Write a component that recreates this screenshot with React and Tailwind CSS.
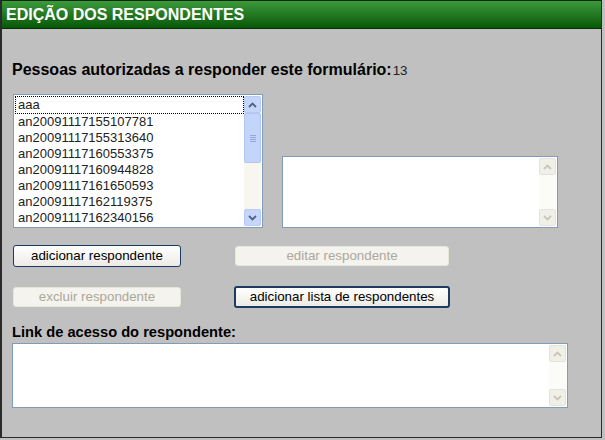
import React from "react";

const items = [
  "an20091117155107781",
  "an20091117155313640",
  "an20091117160553375",
  "an20091117160944828",
  "an20091117161650593",
  "an20091117162119375",
  "an20091117162340156",
];

function Chevron({ up, color }) {
  return (
    <svg width="9" height="6" viewBox="0 0 9 6">
      <path
        d={up ? "M1 5 L4.5 1.5 L8 5" : "M1 1 L4.5 4.5 L8 1"}
        fill="none"
        stroke={color}
        strokeWidth="1.8"
      />
    </svg>
  );
}

function ActiveScrollbar() {
  return (
    <div className="flex w-[17px] shrink-0 flex-col bg-[#f7f7f0]">
      <div className="flex h-[17px] items-center justify-center rounded-[2px] border border-[#b7caf5] bg-[#c6d6fb]">
        <Chevron up color="#4d6185" />
      </div>
      <div className="flex h-[50px] flex-col items-center justify-center gap-[1px] rounded-[2px] border border-[#b1c5f3] bg-[#c4d5fc]">
        <div className="h-px w-[6px] bg-[#8fa8e4]" />
        <div className="h-px w-[6px] bg-[#8fa8e4]" />
        <div className="h-px w-[6px] bg-[#8fa8e4]" />
        <div className="h-px w-[6px] bg-[#8fa8e4]" />
      </div>
      <div className="flex-1" />
      <div className="flex h-[17px] items-center justify-center rounded-[2px] border border-[#b7caf5] bg-[#c6d6fb]">
        <Chevron color="#4d6185" />
      </div>
    </div>
  );
}

function DisabledScrollbar() {
  return (
    <div className="flex w-[17px] shrink-0 flex-col bg-[#fbfbf8]">
      <div className="flex h-[17px] items-center justify-center rounded-[2px] border border-[#e4e3da] bg-[#f1f0e8]">
        <Chevron up color="#c9c7ba" />
      </div>
      <div className="flex-1" />
      <div className="flex h-[17px] items-center justify-center rounded-[2px] border border-[#e4e3da] bg-[#f1f0e8]">
        <Chevron color="#c9c7ba" />
      </div>
    </div>
  );
}

function Btn({ children, disabled, className = "" }) {
  return disabled ? (
    <div
      className={`flex h-[20px] items-center justify-center rounded-[3px] border border-[#e6e5dc] bg-[#f4f3ee] text-[13.33px] text-[#aca899] ${className}`}
    >
      {children}
    </div>
  ) : (
    <div
      className={`flex h-[22px] items-center justify-center rounded-[3px] border border-[#1c3a62] bg-gradient-to-b from-white to-[#ecebe6] text-[13.33px] text-black ${className}`}
    >
      {children}
    </div>
  );
}

export default function App() {
  return (
    <div
      className="h-[440px] w-[605px] bg-[#c0c0c0]"
      style={{ fontFamily: '"Liberation Sans", Arial, sans-serif' }}
    >
      <div className="flex h-[438px] w-[602px] flex-col border-b border-l-2 border-r border-[#2a2a2a]">
        <div className="flex h-[29px] items-center border-y border-[#0e2a0e] bg-gradient-to-b from-[#3c9a3c] to-[#055805] pl-[4px] pt-[1px] text-[16px] font-bold text-white">
          EDIÇÃO DOS RESPONDENTES
        </div>

        <div className="mt-[32px] flex items-baseline pl-[10px] text-[16px] font-bold leading-[18px] text-black">
          Pessoas autorizadas a responder este formulário:
          <span className="ml-[1px] text-[13.33px] font-normal text-[#222]">13</span>
        </div>

        <div className="mt-[14px] flex items-end pl-[11px]">
          <div className="flex h-[134px] w-[250px] border border-[#7f9db9] bg-white p-[1px]">
            <div className="flex flex-1 flex-col text-[13px] leading-[16px] text-[#222]">
              <div className="border border-dotted border-black pl-[2px]">aaa</div>
              {items.map((t) => (
                <div key={t} className="pl-[3px]">
                  {t}
                </div>
              ))}
            </div>
            <ActiveScrollbar />
          </div>

          <div className="ml-[19px] flex h-[72px] w-[276px] border border-[#7f9db9] bg-white p-[1px]">
            <div className="flex-1" />
            <DisabledScrollbar />
          </div>
        </div>

        <div className="mt-[17px] grid grid-cols-[168px_216px] gap-x-[53px] gap-y-[19px] pl-[11px]">
          <Btn>adicionar respondente</Btn>
          <Btn disabled className="mx-[1px] mt-[1px] w-[214px]">
            editar respondente
          </Btn>
          <Btn disabled className="mt-[1px]">
            excluir respondente
          </Btn>
          <Btn className="border-2 border-[#0f3c73]">adicionar lista de respondentes</Btn>
        </div>

        <div className="mt-[16px] pl-[10px] text-[14.67px] font-bold leading-[16px] text-black">
          Link de acesso do respondente:
        </div>

        <div className="ml-[10px] mt-[3px] flex h-[65px] w-[556px] border border-[#7f9db9] bg-white p-[1px]">
          <div className="flex-1" />
          <DisabledScrollbar />
        </div>
      </div>
    </div>
  );
}
